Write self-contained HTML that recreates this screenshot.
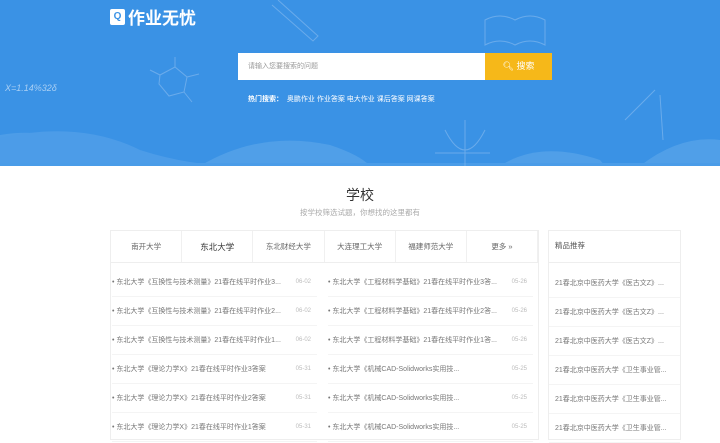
<!DOCTYPE html>
<html><head><meta charset="utf-8"><style>
*{margin:0;padding:0;box-sizing:border-box}
body{width:720px;height:438px;overflow:hidden;background:#fff;font-family:"Liberation Sans","Noto Sans CJK SC",sans-serif;position:relative}
.hd{position:absolute;left:0;top:0;width:720px;height:166px;background:#3a92e5;overflow:hidden}
.logo{position:absolute;left:110px;top:4px;color:#fff;font-size:17px;font-weight:bold;display:flex;align-items:center}
.logo i{display:inline-block;width:15px;height:16px;border-radius:2px;margin-right:3px;background:#fff;color:#3a92e5;font-size:10px;font-style:normal;text-align:center;line-height:15px}
.srch{position:absolute;left:238px;top:53px;width:247px;height:27px;background:#fff;font-size:7px;color:#999;line-height:27px;padding-left:10px}
.btn{position:absolute;left:485px;top:53px;width:67px;height:27px;background:#f6b819;color:#fff;font-size:9px;line-height:27px;text-align:center}
.hot{position:absolute;left:248px;top:94px;color:#fff;font-size:7px}
h2{position:absolute;left:0;width:720px;top:185px;text-align:center;font-size:14px;color:#333;font-weight:normal}
.sub{position:absolute;left:0;width:720px;top:207px;text-align:center;font-size:7.5px;color:#aaa}
.box{position:absolute;left:110px;top:230px;width:429px;height:210px;background:#fff;border:1px solid #eee}
.tabs{display:flex;height:32px;border-bottom:1px solid #eee}
.tabs div{flex:1;text-align:center;line-height:32px;font-size:7.5px;color:#666;border-right:1px solid #f0f0f0}
.tabs .on{font-size:8.5px;color:#333;background:#fff}
.row{position:absolute;font-size:7px;color:#777;width:205px;height:29px;line-height:29px;border-bottom:1px solid #f4f4f4}
.row b{font-weight:normal;position:absolute;right:6px;color:#bbb;font-size:6px}
.rb{position:absolute;left:548px;top:230px;width:133px;height:210px;background:#fff;border:1px solid #eee}
.rb .t{height:32px;line-height:30px;padding-left:6px;font-size:7.5px;color:#555;border-bottom:1px solid #eee}
.rr{height:29px;line-height:29px;padding-left:6px;font-size:7px;color:#777;border-bottom:1px solid #f4f4f4}
</style></head><body>
<div class="hd">
<svg width="720" height="166" style="position:absolute;left:0;top:0">
<path d="M0 135 Q60 125 110 160 L120 166 H0Z" fill="#5aa5ea" opacity=".6"/>
<path d="M0 138 Q80 120 140 150 Q190 166 240 166 H0Z" fill="#4c9ce8"/>
<path d="M200 166 Q260 130 330 145 Q360 155 370 166Z" fill="#5aa5ea" opacity=".7"/>
<path d="M500 166 Q540 140 600 160 L605 166Z" fill="#5aa5ea" opacity=".7"/>
<path d="M640 166 Q680 135 720 140 V166Z" fill="#5aa5ea" opacity=".7"/>
<rect x="0" y="163" width="720" height="3" fill="#4a9ce8"/>
<g stroke="#7fb6ee" fill="none" stroke-width="1" opacity=".7">
<path d="M278 0 L318 36 L313 41 L272 5"/><path d="M485 20 q15-8 30 0 q15-8 30 0 v25 q-15-8-30 0 q-15-8-30 0z"/>
<path d="M160 75 l15-8 l12 10 l-3 15 l-15 4 l-10-12z"/><path d="M175 67 v-10 M187 77 l12-3 M184 92 l8 10 M160 75 l-10-5"/>
<path d="M465 120 v46 M435 153 h55"/><path d="M445 130 q20 40 40 0"/><path d="M655 90 l-30 30 M660 95 l3 45"/>
</g>
<text x="5" y="91" fill="#a9cff4" font-size="9" font-style="italic">X=1.14%32δ</text>
</svg>
<div class="logo"><i>Q</i>作业无忧</div>
<div class="srch">请输入您要搜索的问题</div>
<div class="btn">🔍︎ 搜索</div>
<div class="hot"><b>热门搜索：</b> &nbsp;奥鹏作业 作业答案 电大作业 课后答案 网课答案</div>
</div>
<h2>学校</h2>
<div class="sub">按学校筛选试题，你想找的这里都有</div>
<div class="box"><div class="tabs"><div>南开大学</div><div class="on">东北大学</div><div>东北财经大学</div><div>大连理工大学</div><div>福建师范大学</div><div>更多 »</div></div></div>
<div class="row" style="left:112px;top:268px">• 东北大学《互换性与技术测量》21春在线平时作业3...<b>06-02</b></div>
<div class="row" style="left:112px;top:297px">• 东北大学《互换性与技术测量》21春在线平时作业2...<b>06-02</b></div>
<div class="row" style="left:112px;top:326px">• 东北大学《互换性与技术测量》21春在线平时作业1...<b>06-02</b></div>
<div class="row" style="left:112px;top:355px">• 东北大学《理论力学X》21春在线平时作业3答案<b>05-31</b></div>
<div class="row" style="left:112px;top:384px">• 东北大学《理论力学X》21春在线平时作业2答案<b>05-31</b></div>
<div class="row" style="left:112px;top:413px">• 东北大学《理论力学X》21春在线平时作业1答案<b>05-31</b></div>
<div class="row" style="left:328px;top:268px">• 东北大学《工程材料学基础》21春在线平时作业3答...<b>05-26</b></div>
<div class="row" style="left:328px;top:297px">• 东北大学《工程材料学基础》21春在线平时作业2答...<b>05-26</b></div>
<div class="row" style="left:328px;top:326px">• 东北大学《工程材料学基础》21春在线平时作业1答...<b>05-26</b></div>
<div class="row" style="left:328px;top:355px">• 东北大学《机械CAD-Solidworks实用技...<b>05-25</b></div>
<div class="row" style="left:328px;top:384px">• 东北大学《机械CAD-Solidworks实用技...<b>05-25</b></div>
<div class="row" style="left:328px;top:413px">• 东北大学《机械CAD-Solidworks实用技...<b>05-25</b></div>
<div class="rb"><div class="t">精品推荐</div><div style="height:6px"></div>
<div class="rr">21春北京中医药大学《医古文Z》...</div><div class="rr">21春北京中医药大学《医古文Z》...</div><div class="rr">21春北京中医药大学《医古文Z》...</div><div class="rr">21春北京中医药大学《卫生事业管...</div><div class="rr">21春北京中医药大学《卫生事业管...</div><div class="rr">21春北京中医药大学《卫生事业管...</div></div>
</body></html>
